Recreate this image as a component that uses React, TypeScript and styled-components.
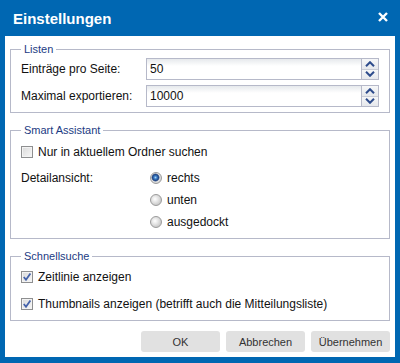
import React from "react";
import styled, { createGlobalStyle } from "styled-components";

const GlobalStyle = createGlobalStyle`
  html, body { margin: 0; padding: 0; }
  body { font-family: "Liberation Sans", Arial, sans-serif; }
  * { box-sizing: border-box; }
`;

const Window = styled.div`
  width: 400px;
  height: 363px;
  background: #0067b2;
  display: flex;
  flex-direction: column;
`;

const TitleBar = styled.div`
  height: 36px;
  flex: none;
  display: flex;
  align-items: center;
  justify-content: space-between;
  padding: 0 12px 0 13px;
  color: #fff;
  font-weight: bold;
  font-size: 15px;
`;

const CloseButton = styled.button`
  background: none;
  border: 0;
  padding: 0;
  width: 10px;
  height: 10px;
  margin-bottom: 2px;
  display: flex;
  cursor: pointer;
`;

const Panel = styled.div`
  flex: 1;
  margin: 0 5px 6px;
  background: #fff;
  padding: 7px 5px 5px;
  display: flex;
  flex-direction: column;
`;

const Group = styled.fieldset<{ $top: number; $pt: number; $pb: number }>`
  margin: ${(p) => p.$top}px 0 0;
  padding: ${(p) => p.$pt}px 10px ${(p) => p.$pb}px;
  border: 1px solid #b6b9c9;
  min-width: 0;
`;

const Legend = styled.legend`
  padding: 0 3px;
  font-size: 11px;
  line-height: 13px;
  color: #1b3b83;
`;

const FieldGrid = styled.div<{ $gap: number }>`
  display: grid;
  grid-template-columns: 125px 1fr;
  row-gap: ${(p) => p.$gap}px;
  align-items: center;
`;

const Label = styled.span`
  font-size: 12px;
  color: #111;
  line-height: 16px;
`;

const NumberField = styled.div`
  display: flex;
  height: 22px;
`;

const TextBox = styled.div`
  flex: 1;
  border: 1px solid #b6b9c9;
  border-right: none;
  background: linear-gradient(#e6e9ec, #ffffff 7px);
  font-size: 12px;
  color: #111;
  padding-left: 3px;
  line-height: 20px;
`;

const Spinner = styled.div`
  width: 18px;
  display: flex;
  flex-direction: column;
  border: 1px solid #b6b9c9;
`;

const SpinButton = styled.div<{ $up?: boolean }>`
  flex: 1;
  display: flex;
  align-items: center;
  justify-content: center;
  background: linear-gradient(#f6f7f8, #e6e8ec);
  border-bottom: ${(p) => (p.$up ? "1px solid #c9ccd6" : "none")};
`;

const CheckRow = styled.div`
  display: flex;
  align-items: center;
  gap: 5px;
  height: 16px;
  font-size: 12px;
  color: #111;
`;

const Stack = styled.div<{ $gap: number }>`
  display: flex;
  flex-direction: column;
  gap: ${(p) => p.$gap}px;
`;

const CheckBox = styled.span`
  width: 12px;
  height: 12px;
  flex: none;
  border: 1px solid #8e8f90;
  background: linear-gradient(135deg, #d9d9d9, #f7f7f7);
  box-shadow: inset 0 0 0 1px #f3f3f3;
  display: flex;
  align-items: center;
  justify-content: center;
`;

const RadioGroup = styled.div`
  display: flex;
  flex-direction: column;
  gap: 6px;
  padding-left: 4px;
`;

const Radio = styled.span<{ $on?: boolean }>`
  width: 12px;
  height: 12px;
  flex: none;
  border-radius: 50%;
  border: 1px solid #9b9b9b;
  background: ${(p) =>
    p.$on
      ? "radial-gradient(circle at 45% 45%, #a9d3f7 0, #3b7fc6 1.5px, #1f4688 3px, #6b7f9e 3.8px, #e4e4e4 4.3px, #cfcfcf 6px)"
      : "radial-gradient(circle at 40% 40%, #ffffff 0, #e6e6e6 3px, #cbcbcb 6px)"};
`;

const ButtonBar = styled.div`
  display: flex;
  justify-content: flex-end;
  gap: 6px;
  margin-top: 10px;
`;

const Button = styled.button`
  width: 79px;
  height: 21px;
  border: none;
  border-radius: 3px;
  background: #e1e1e1;
  font-family: "Liberation Sans", Arial, sans-serif;
  font-size: 11px;
  color: #333;
  padding: 0;
  cursor: pointer;
`;

const Chevron = ({ up }: { up?: boolean }) => (
  <svg width="10" height="6" viewBox="0 0 10 6">
    <polyline
      points={up ? "1,5.2 5,1.2 9,5.2" : "1,0.8 5,4.8 9,0.8"}
      fill="none"
      stroke="#2d4b8c"
      strokeWidth="2"
    />
  </svg>
);

const Check = () => (
  <svg width="10" height="10" viewBox="0 0 10 10">
    <polyline points="1.8,5 4,7.8 8.4,1.6" fill="none" stroke="#4462aa" strokeWidth="1.8" />
  </svg>
);

const Number = ({ value }: { value: string }) => (
  <NumberField>
    <TextBox>{value}</TextBox>
    <Spinner>
      <SpinButton $up>
        <Chevron up />
      </SpinButton>
      <SpinButton>
        <Chevron />
      </SpinButton>
    </Spinner>
  </NumberField>
);

const CheckItem = ({ checked, children }: { checked?: boolean; children: React.ReactNode }) => (
  <CheckRow>
    <CheckBox>{checked && <Check />}</CheckBox>
    {children}
  </CheckRow>
);

const RadioItem = ({ on, children }: { on?: boolean; children: React.ReactNode }) => (
  <CheckRow>
    <Radio $on={on} />
    {children}
  </CheckRow>
);

export default function App() {
  return (
    <>
      <GlobalStyle />
      <Window>
        <TitleBar>
          <span>Einstellungen</span>
          <CloseButton aria-label="Schließen">
            <svg width="10" height="10" viewBox="0 0 10 10">
              <path d="M1 1 L9 9 M9 1 L1 9" stroke="#fff" strokeWidth="2.4" />
            </svg>
          </CloseButton>
        </TitleBar>
        <Panel>
          <Group $top={0} $pt={2} $pb={5}>
            <Legend>Listen</Legend>
            <FieldGrid $gap={5}>
              <Label>Einträge pro Seite:</Label>
              <Number value="50" />
              <Label>Maximal exportieren:</Label>
              <Number value="10000" />
            </FieldGrid>
          </Group>
          <Group $top={11} $pt={7} $pb={8}>
            <Legend>Smart Assistant</Legend>
            <Stack $gap={10}>
              <CheckItem>Nur in aktuellem Ordner suchen</CheckItem>
              <FieldGrid $gap={0} style={{ alignItems: "start" }}>
                <Label>Detailansicht:</Label>
                <RadioGroup>
                  <RadioItem on>rechts</RadioItem>
                  <RadioItem>unten</RadioItem>
                  <RadioItem>ausgedockt</RadioItem>
                </RadioGroup>
              </FieldGrid>
            </Stack>
          </Group>
          <Group $top={11} $pt={6} $pb={8}>
            <Legend>Schnellsuche</Legend>
            <Stack $gap={11}>
              <CheckItem checked>Zeitlinie anzeigen</CheckItem>
              <CheckItem checked>Thumbnails anzeigen (betrifft auch die Mitteilungsliste)</CheckItem>
            </Stack>
          </Group>
          <ButtonBar>
            <Button>OK</Button>
            <Button>Abbrechen</Button>
            <Button>Übernehmen</Button>
          </ButtonBar>
        </Panel>
      </Window>
    </>
  );
}
